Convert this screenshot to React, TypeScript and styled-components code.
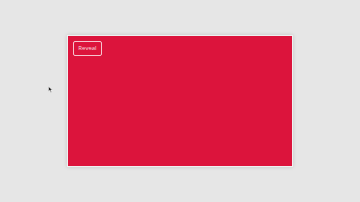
import React from 'react'
import styled, { createGlobalStyle } from 'styled-components'

const GlobalStyle = createGlobalStyle`
  html, body {
    margin: 0;
    padding: 0;
    background: #e6e6e6;
    font-family: 'Open Sans', 'Liberation Sans', sans-serif;
  }
`

const Stage = styled.div`
  position: relative;
  width: 360px;
  height: 202px;
  display: flex;
  align-items: center;
  justify-content: center;
`

const Card = styled.div`
  box-sizing: border-box;
  width: 226px;
  height: 132px;
  background: #dc143c;
  border: 1px solid #f0f0f0;
  box-shadow: 0 0 4px rgba(0, 0, 0, 0.15);
  padding: 5px;
  display: flex;
  align-items: flex-start;
`

const RevealButton = styled.button`
  box-sizing: border-box;
  width: 29px;
  height: 15px;
  padding: 0;
  background: transparent;
  border: 1px solid rgba(255, 255, 255, 0.75);
  border-radius: 2px;
  color: rgba(255, 255, 255, 0.85);
  font-family: 'Open Sans', 'Liberation Sans', sans-serif;
  font-size: 6px;
  font-weight: 400;
  line-height: 13px;
  cursor: pointer;
`

const Pointer = styled.svg`
  position: absolute;
  left: 48px;
  top: 86px;
`

const App = () => (
  <Stage>
    <GlobalStyle />
    <Card>
      <RevealButton>Reveal</RevealButton>
    </Card>
    <Pointer width='5' height='7' viewBox='0 0 5 7'>
      <path d='M0.5 0.5 L0.5 5.5 L1.8 4.3 L2.8 6.5 L3.6 6.1 L2.7 4 L4.4 4 Z' fill='#222' stroke='#fff' strokeWidth='0.5' />
    </Pointer>
  </Stage>
)

export default App
